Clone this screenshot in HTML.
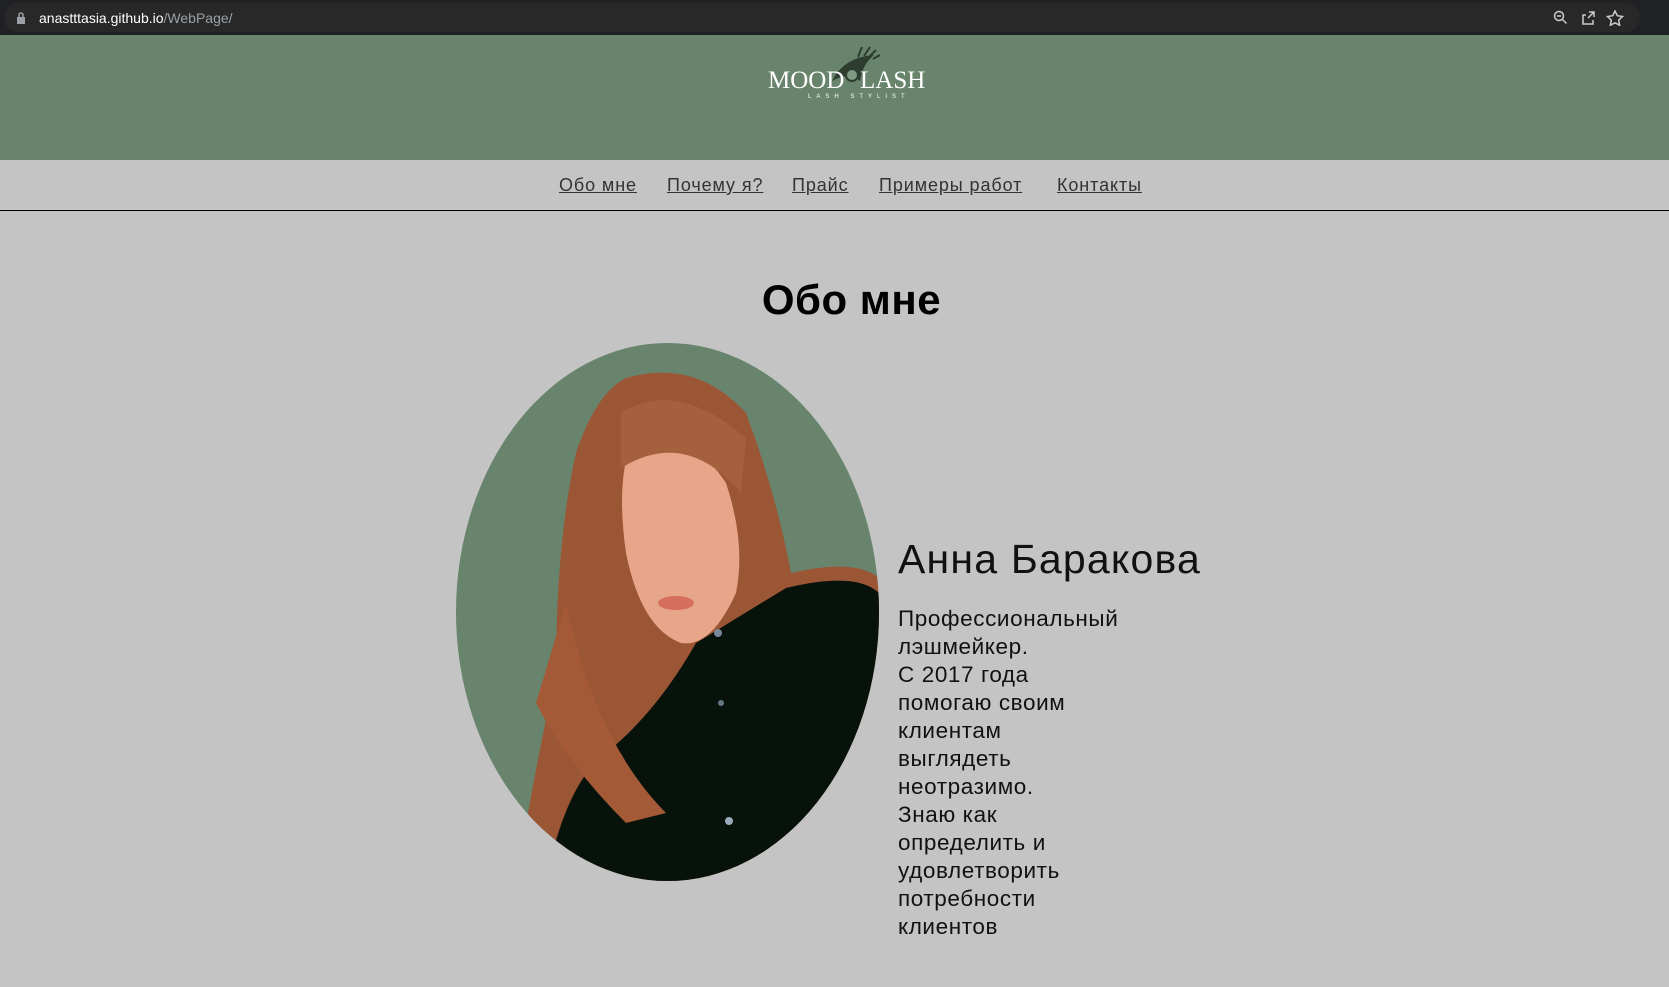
<!DOCTYPE html>
<html><head><meta charset="utf-8"><style>
*{margin:0;padding:0;box-sizing:border-box}
body{width:1669px;height:987px;background:#c4c4c4;font-family:"Liberation Sans",sans-serif;position:relative;overflow:hidden}
.bar{position:absolute;left:0;top:0;width:1669px;height:35px;background:#202124}
.url{position:absolute;left:4px;top:3px;width:1636px;height:29px;background:#282828;border-radius:15px}
.url span{position:absolute;left:35px;top:7px;font-size:14px;color:#fff}
.url span i{font-style:normal;color:#9aa0a6}
.hdr{position:absolute;left:0;top:35px;width:1669px;height:125px;background:#68846c}
.nav{position:absolute;left:0;top:160px;width:1669px;height:51px;border-bottom:1.5px solid #000}
.nav a{position:absolute;top:15px;font-size:18px;letter-spacing:0.9px;color:#333;text-decoration:underline;white-space:nowrap}
h1{position:absolute;left:0;width:1703px;text-align:center;top:276px;font-size:42px;font-weight:600;letter-spacing:0.5px;color:#000}
.name{position:absolute;left:898px;top:536px;font-size:41px;letter-spacing:1.2px;color:#111;white-space:nowrap}
.p{position:absolute;left:898px;top:605px;font-size:22.5px;letter-spacing:0.6px;line-height:28px;color:#111}
</style></head><body>
<div class="bar"><div class="url">
<svg style="position:absolute;left:12px;top:9px" width="10" height="12"><rect x="1" y="5" width="8" height="7" fill="#9aa0a6"/><path d="M3 5V3a2 2 0 0 1 4 0v2" stroke="#9aa0a6" fill="none" stroke-width="1.5"/></svg>
<span>anastttasia.github.io<i>/WebPage/</i></span>
<svg style="position:absolute;left:1549px;top:7px" width="80" height="16" fill="none" stroke="#ccc" stroke-width="1.5"><circle cx="6" cy="6" r="4.5"/><path d="M9.5 9.5l4 4M4 6h4"/><path d="M33 5h-3v9h10v-4M36 2h5v5M41 2l-6 6"/><path d="M62 1l2.3 4.7 5.2.8-3.8 3.6.9 5.1-4.6-2.4-4.6 2.4.9-5.1-3.8-3.6 5.2-.8z"/></svg>
</div></div>
<div class="hdr">
<svg style="position:absolute;left:766px;top:10px" width="165" height="60">
<path d="M66 36 Q78 12 108 10 Q96 20 94 36 Q84 26 66 36Z" fill="#2d3d30"/>
<path d="M92 12l4-10M98 11l6-9M103 12l7-7M107 14l7-4" stroke="#2d3d30" stroke-width="2"/>
<circle cx="86" cy="30" r="6" fill="#7e9a82" stroke="#2d3d30" stroke-width="2"/>
<text x="2" y="43" font-family="Liberation Serif,serif" font-size="25" fill="#fff">MOOD</text>
<text x="94" y="43" font-family="Liberation Serif,serif" font-size="25" fill="#fff">LASH</text>
<text x="42" y="53" font-family="Liberation Sans,sans-serif" font-size="6" letter-spacing="5" fill="#fff">LASH STYLIST</text>
</svg>
</div>
<div class="nav">
<a style="left:559px">Обо мне</a><a style="left:667px">Почему я?</a><a style="left:792px">Прайс</a><a style="left:879px">Примеры работ</a><a style="left:1057px">Контакты</a>
</div>
<h1>Обо мне</h1>
<svg style="position:absolute;left:456px;top:343px" width="423" height="538">
<defs><clipPath id="c"><ellipse cx="211.5" cy="269" rx="211.5" ry="269"/></clipPath></defs>
<g clip-path="url(#c)">
<rect width="423" height="538" fill="#68846c"/>
<path d="M170 35 Q240 15 290 70 Q320 150 335 230 Q400 215 423 235 L423 538 L60 538 Q80 420 100 330 Q100 200 120 110 Q140 50 170 35Z" fill="#9b5636"/>
<path d="M240 300 L330 245 Q400 228 423 250 L423 538 L90 538 Q110 440 150 410 Q200 370 240 300Z" fill="#07120a"/>
<path d="M110 260 Q140 400 210 470 L170 480 Q110 420 80 360Z" fill="#a45a37"/>
<path d="M175 100 Q230 80 270 140 Q290 200 280 250 Q255 305 225 300 Q185 285 170 210 Q160 140 175 100Z" fill="#e7a68a"/>
<path d="M165 70 Q220 35 290 95 L285 150 Q230 85 165 125Z" fill="#a5603d"/>
<ellipse cx="220" cy="260" rx="18" ry="7" fill="#d56e5b"/>
<circle cx="262" cy="290" r="4" fill="#789"/><circle cx="265" cy="360" r="3" fill="#678"/><circle cx="273" cy="478" r="4" fill="#9ab"/>
</g></svg>
<div class="name">Анна Баракова</div>
<div class="p">Профессиональный<br>лэшмейкер.<br>С 2017 года<br>помогаю своим<br>клиентам<br>выглядеть<br>неотразимо.<br>Знаю как<br>определить и<br>удовлетворить<br>потребности<br>клиентов</div>
</body></html>
